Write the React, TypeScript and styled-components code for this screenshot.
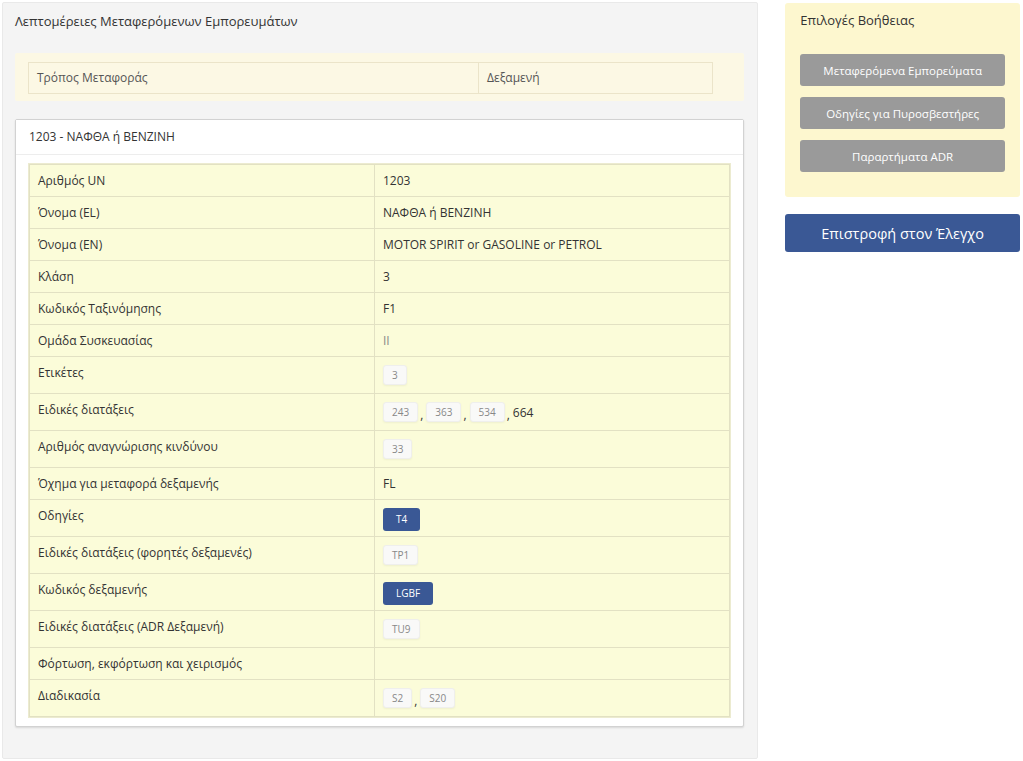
import React from 'react'
import styled, { createGlobalStyle, css } from 'styled-components'

const GlobalStyle = createGlobalStyle`
  html, body {
    margin: 0;
    padding: 0;
    background: #ffffff;
    font-family: "Open Sans", "Noto Sans", "DejaVu Sans", sans-serif;
    color: #333;
  }
  * {
    box-sizing: border-box;
  }
`

const Page = styled.div`
  display: flex;
  align-items: flex-start;
  gap: 27px;
  padding: 2px 3px 0 2px;
  width: 1023px;
`

const MainPanel = styled.section`
  width: 757px;
  height: 757px;
  background: #f4f4f4;
  border: 1px solid #e9e9e9;
  border-radius: 2px;
  padding: 8px 13px 30px 12px;
  display: flex;
  flex-direction: column;
`

const PanelTitle = styled.h2`
  margin: 0 0 22px;
  font-size: 13px;
  font-weight: 400;
  line-height: 20px;
  color: #333;
`

const TransportBox = styled.div`
  background: #fcf8e4;
  border-radius: 2px;
  padding: 9px 31px 7px 13px;
  margin-bottom: 18px;
`

const TransportTable = styled.table`
  border-collapse: collapse;
  width: 685px;
  font-size: 12px;
  td {
    border: 1px solid #ebe4c9;
    padding: 7px 8px;
    line-height: 16px;
    color: #555;
  }
  td:first-child {
    width: 450px;
  }
`

const DetailCard = styled.div`
  background: #ffffff;
  border: 1px solid #d2d2d2;
  border-radius: 2px;
  box-shadow: 0 1px 2px rgba(0, 0, 0, 0.12);
`

const CardHeader = styled.div`
  padding: 8px 13px 9px;
  font-size: 12px;
  line-height: 17px;
  color: #333;
  border-bottom: 1px solid #ededed;
  background: #fff;
`

const CardBody = styled.div`
  padding: 9px 13px 9px 13px;
`

const DetailTable = styled.table`
  border-collapse: collapse;
  width: 100%;
  background: #fbfcd9;
  font-size: 12px;
  box-shadow: 0 0 0 1px #ecebd0;
`

const Cell = styled.td<{ $muted?: boolean }>`
  border: 1px solid #e2e1c3;
  padding: 7px 8px;
  line-height: 17px;
  vertical-align: top;
  color: ${(p) => (p.$muted ? '#8a8a8a' : '#333')};
  &:first-child {
    width: 345px;
  }
`

const TagList = styled.div`
  display: flex;
  align-items: center;
  height: 22px;
  color: #333;
`

const Sep = styled.span`
  margin: 0 3px 0 2px;
  position: relative;
  top: 2px;
`

const grey = css`
  height: 20px;
  line-height: 18px;
  padding: 0 8px;
  background: #f9f9f8;
  border: 1px solid #efefed;
  box-shadow: 0 1px 2px rgba(0, 0, 0, 0.05);
  color: #888;
`

const blue = css`
  height: 23px;
  line-height: 23px;
  padding: 0 13px;
  background: #3a5895;
  color: #fff;
  margin-top: 2px;
`

const Tag = styled.span<{ $variant?: 'grey' | 'blue' }>`
  display: inline-block;
  font-size: 10px;
  border-radius: 3px;
  ${(p) => (p.$variant === 'blue' ? blue : grey)}
`

const Sidebar = styled.aside`
  width: 235px;
  display: flex;
  flex-direction: column;
  gap: 17px;
  padding-top: 1px;
`

const HelpPanel = styled.div`
  background: #fdf7cf;
  border-radius: 3px;
  padding: 7px 15px 25px;
  display: flex;
  flex-direction: column;
  gap: 11px;
`

const HelpTitle = styled.h3`
  margin: 0 0 13px;
  font-size: 13px;
  font-weight: 400;
  line-height: 20px;
  color: #333;
`

const HelpButton = styled.button`
  height: 32px;
  border: none;
  border-radius: 3px;
  background: #9a9a9a;
  color: #fff;
  font-family: inherit;
  font-size: 11.5px;
  cursor: pointer;
`

const BackButton = styled.button`
  height: 38px;
  border: none;
  border-radius: 3px;
  background: #3a5895;
  color: #fff;
  font-family: inherit;
  font-size: 14.5px;
  cursor: pointer;
`

type Value =
  | { kind: 'text'; text: string; muted?: boolean }
  | { kind: 'tags'; tags: string[]; variant: 'grey' | 'blue'; tail?: string }

const rows: { label: string; value: Value }[] = [
  { label: 'Αριθμός UN', value: { kind: 'text', text: '1203' } },
  { label: 'Όνομα (EL)', value: { kind: 'text', text: 'ΝΑΦΘΑ ή ΒΕΝΖΙΝΗ' } },
  { label: 'Όνομα (EN)', value: { kind: 'text', text: 'MOTOR SPIRIT or GASOLINE or PETROL' } },
  { label: 'Κλάση', value: { kind: 'text', text: '3' } },
  { label: 'Κωδικός Ταξινόμησης', value: { kind: 'text', text: 'F1' } },
  { label: 'Ομάδα Συσκευασίας', value: { kind: 'text', text: 'II', muted: true } },
  { label: 'Ετικέτες', value: { kind: 'tags', tags: ['3'], variant: 'grey' } },
  {
    label: 'Ειδικές διατάξεις',
    value: { kind: 'tags', tags: ['243', '363', '534'], variant: 'grey', tail: '664' },
  },
  { label: 'Αριθμός αναγνώρισης κινδύνου', value: { kind: 'tags', tags: ['33'], variant: 'grey' } },
  { label: 'Όχημα για μεταφορά δεξαμενής', value: { kind: 'text', text: 'FL' } },
  { label: 'Οδηγίες', value: { kind: 'tags', tags: ['T4'], variant: 'blue' } },
  { label: 'Ειδικές διατάξεις (φορητές δεξαμενές)', value: { kind: 'tags', tags: ['TP1'], variant: 'grey' } },
  { label: 'Κωδικός δεξαμενής', value: { kind: 'tags', tags: ['LGBF'], variant: 'blue' } },
  { label: 'Ειδικές διατάξεις (ADR Δεξαμενή)', value: { kind: 'tags', tags: ['TU9'], variant: 'grey' } },
  { label: 'Φόρτωση, εκφόρτωση και χειρισμός', value: { kind: 'text', text: '' } },
  { label: 'Διαδικασία', value: { kind: 'tags', tags: ['S2', 'S20'], variant: 'grey' } },
]

const ValueContent = ({ value }: { value: Value }) => {
  if (value.kind === 'text') return <>{value.text}</>
  return (
    <TagList>
      {value.tags.map((t, i) => (
        <React.Fragment key={t}>
          {i > 0 && <Sep>,</Sep>}
          <Tag $variant={value.variant}>{t}</Tag>
        </React.Fragment>
      ))}
      {value.tail && (
        <>
          <Sep>,</Sep>
          <span>{value.tail}</span>
        </>
      )}
    </TagList>
  )
}

export default function App() {
  return (
    <>
      <GlobalStyle />
      <Page>
        <MainPanel>
          <PanelTitle>Λεπτομέρειες Μεταφερόμενων Εμπορευμάτων</PanelTitle>
          <TransportBox>
            <TransportTable>
              <tbody>
                <tr>
                  <td>Τρόπος Μεταφοράς</td>
                  <td>Δεξαμενή</td>
                </tr>
              </tbody>
            </TransportTable>
          </TransportBox>
          <DetailCard>
            <CardHeader>1203 - ΝΑΦΘΑ ή ΒΕΝΖΙΝΗ</CardHeader>
            <CardBody>
              <DetailTable>
                <tbody>
                  {rows.map((r) => (
                    <tr key={r.label}>
                      <Cell>{r.label}</Cell>
                      <Cell $muted={r.value.kind === 'text' && r.value.muted}>
                        <ValueContent value={r.value} />
                      </Cell>
                    </tr>
                  ))}
                </tbody>
              </DetailTable>
            </CardBody>
          </DetailCard>
        </MainPanel>
        <Sidebar>
          <HelpPanel>
            <HelpTitle>Επιλογές Βοήθειας</HelpTitle>
            <HelpButton>Μεταφερόμενα Εμπορεύματα</HelpButton>
            <HelpButton>Οδηγίες για Πυροσβεστήρες</HelpButton>
            <HelpButton>Παραρτήματα ADR</HelpButton>
          </HelpPanel>
          <BackButton>Επιστροφή στον Έλεγχο</BackButton>
        </Sidebar>
      </Page>
    </>
  )
}
